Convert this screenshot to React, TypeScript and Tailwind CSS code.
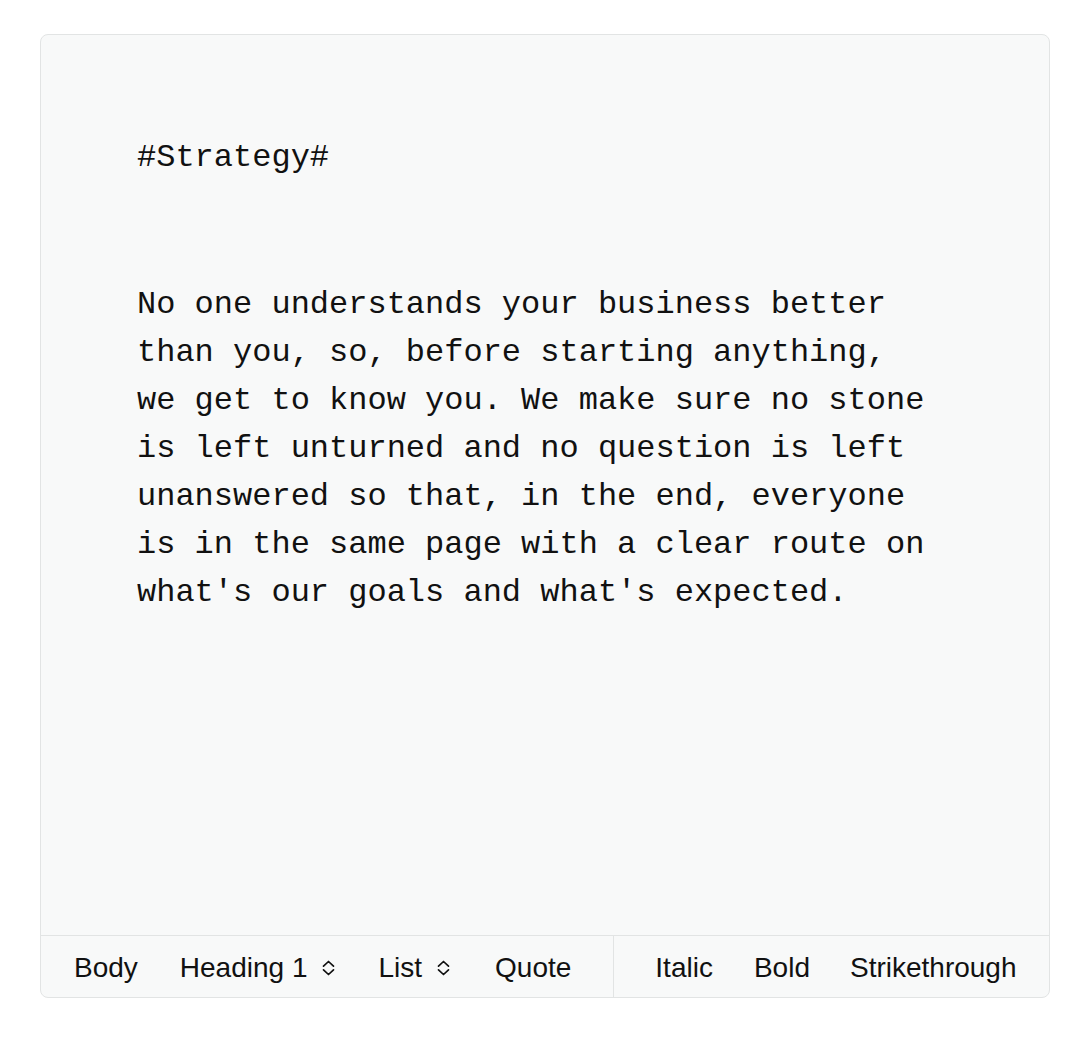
import React from "react";

function UpDown() {
  return (
    <svg width="13" height="16" viewBox="0 0 13 16" fill="none" stroke="#111" strokeWidth="1.7" strokeLinecap="round" strokeLinejoin="round" className="ml-[15px] mr-[1px] shrink-0">
      <path d="M1.5 6.2 L6.5 1.5 L11.5 6.2" />
      <path d="M1.5 9.8 L6.5 14.5 L11.5 9.8" />
    </svg>
  );
}

export default function App() {
  const mono = { fontFamily: '"Liberation Mono", "Courier New", monospace' } as React.CSSProperties;
  const sans = { fontFamily: '"Liberation Sans", Arial, Helvetica, sans-serif' } as React.CSSProperties;
  return (
    <div className="min-h-[1048px] bg-white pt-[34px] pl-[40px]">
      <div className="w-[1010px] h-[964px] rounded-[8px] border border-[#e2e4e4] bg-[#f8f9f9] flex flex-col overflow-hidden">
        <div className="flex-1 pt-[99px] pl-[96px]" style={mono}>
          <div className="text-[32px] leading-[48px] text-[#111]">#Strategy#</div>
          <p className="mt-[99px] w-[800px] text-[32px] leading-[48px] text-[#111]">
            No one understands your business better than you, so, before starting anything, we get to know you. We make sure no stone is left unturned and no question is left unanswered so that, in the end, everyone is in the same page with a clear route on what's our goals and what's expected.
          </p>
        </div>
        <div className="h-[62px] border-t border-[#e2e4e4] flex items-stretch justify-between pl-[12px] pr-[16px] text-[28px] text-[#111] whitespace-nowrap" style={sans}>
          <div className="flex items-center pr-[21px] pt-[2px]">
            <span className="px-[21px]">Body</span>
            <span className="px-[21px] flex items-center">Heading 1<UpDown /></span>
            <span className="px-[21px] flex items-center">List<UpDown /></span>
            <span className="pl-[23px] pr-[21px]">Quote</span>
          </div>
          <div className="flex items-center border-l border-[#e2e4e4] pl-[20px] pt-[2px]">
            <span className="px-[21px]">Italic</span>
            <span className="pl-[20px] pr-[21px]">Bold</span>
            <span className="pl-[19px] pr-[21px]">Strikethrough</span>
          </div>
        </div>
      </div>
    </div>
  );
}
